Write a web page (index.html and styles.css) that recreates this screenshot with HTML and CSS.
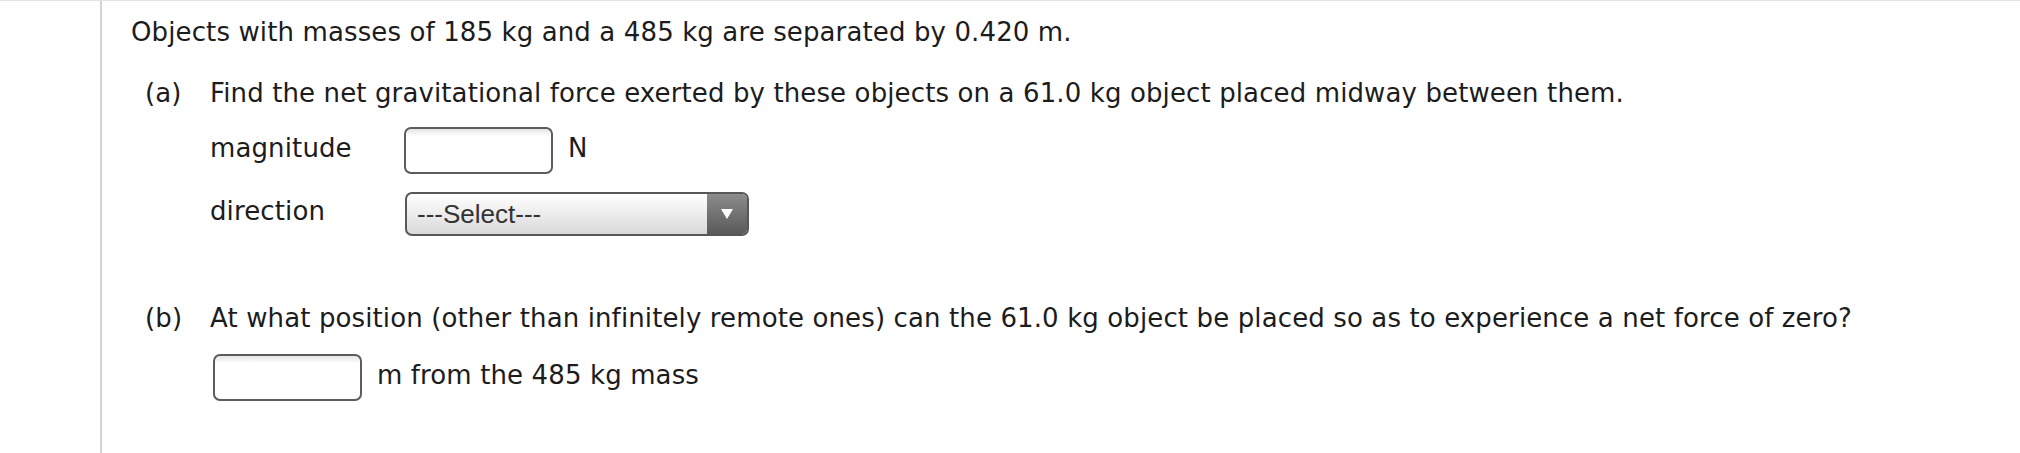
FILE: index.html
```html
<!DOCTYPE html>
<html lang="en">
<head>
<meta charset="utf-8">
<title>Gravitation problem</title>
<link rel="stylesheet" href="styles.css">
</head>
<body>
<div class="page">
  <div class="sheet">
    <p class="intro">Objects with masses of 185 kg and a 485 kg are separated by 0.420 m.</p>

    <div class="part part-a">
      <span class="part-label">(a)</span>
      <div class="part-body">
        <p class="question">Find the net gravitational force exerted by these objects on a 61.0 kg object placed midway between them.</p>
        <div class="field">
          <span class="field-label">magnitude</span>
          <span class="answer-box"></span>
          <span class="unit">N</span>
        </div>
        <div class="field field-select">
          <span class="field-label">direction</span>
          <div class="select">
            <span class="select-text">---Select---</span>
            <span class="select-arrow">
              <svg width="12" height="10" viewBox="0 0 12 10"><path d="M0 0 H12 L6 10 Z" fill="#fff"/></svg>
            </span>
          </div>
        </div>
      </div>
    </div>

    <div class="part part-b">
      <span class="part-label">(b)</span>
      <div class="part-body">
        <p class="question">At what position (other than infinitely remote ones) can the 61.0 kg object be placed so as to experience a net force of zero?</p>
        <div class="field field-inline">
          <span class="answer-box"></span>
          <span class="unit">m from the 485 kg mass</span>
        </div>
      </div>
    </div>
  </div>
</div>
</body>
</html>
```

FILE: styles.css
```css
html, body {
  margin: 0;
  padding: 0;
  background: #fff;
}

body {
  font-family: "DejaVu Sans", Verdana, sans-serif;
  font-size: 26px;
  letter-spacing: 0.12px;
  color: #1c1c1c;
}

.page {
  border-top: 1px solid #e2e2e2;
  height: 452px;
  overflow: hidden;
}

.sheet {
  margin-left: 100px;
  border-left: 2px solid #d4d4d4;
  padding-left: 29px;
  height: 100%;
}

p {
  margin: 0;
}

.intro {
  line-height: 32px;
  padding-top: 15px;
}

.part {
  display: grid;
  grid-template-columns: 65px 1fr;
  margin-left: 14px;
}

.part-label {
  line-height: 32px;
}

.question {
  line-height: 32px;
}

.part-a {
  margin-top: 29px;
}

.part-b {
  margin-top: 66px;
}

.field {
  display: flex;
  align-items: center;
  margin-top: 18px;
}

.field-select {
  margin-top: 18px;
}

.field-inline {
  margin-top: 20px;
  margin-left: 3px;
}

/* labels sit a little above the control's centre line */
.field-label,
.unit {
  margin-bottom: 6px;
}

.field-label {
  width: 194px;
  flex: none;
}

.answer-box {
  box-sizing: border-box;
  width: 149px;
  height: 47px;
  border: 2px solid #5c5c5c;
  border-radius: 7px;
  background: linear-gradient(#e4e4e4, #fff 7px, #fff);
  flex: none;
}

.unit {
  margin-left: 15px;
}

.select {
  box-sizing: border-box;
  width: 344px;
  height: 44px;
  margin-left: 1px;
  border: 2px solid #585858;
  border-radius: 7px;
  background: linear-gradient(#ffffff, #d9d9d9);
  display: flex;
  align-items: stretch;
  overflow: hidden;
  flex: none;
}

.select-text {
  flex: 1;
  display: flex;
  align-items: center;
  padding-left: 10px;
  font-family: "Liberation Sans", Arial, sans-serif;
  font-size: 26px;
  letter-spacing: 0;
  color: #333;
}

.select-arrow {
  width: 40px;
  display: flex;
  align-items: center;
  justify-content: center;
  background: linear-gradient(#8c8c8c, #595959);
}
```
